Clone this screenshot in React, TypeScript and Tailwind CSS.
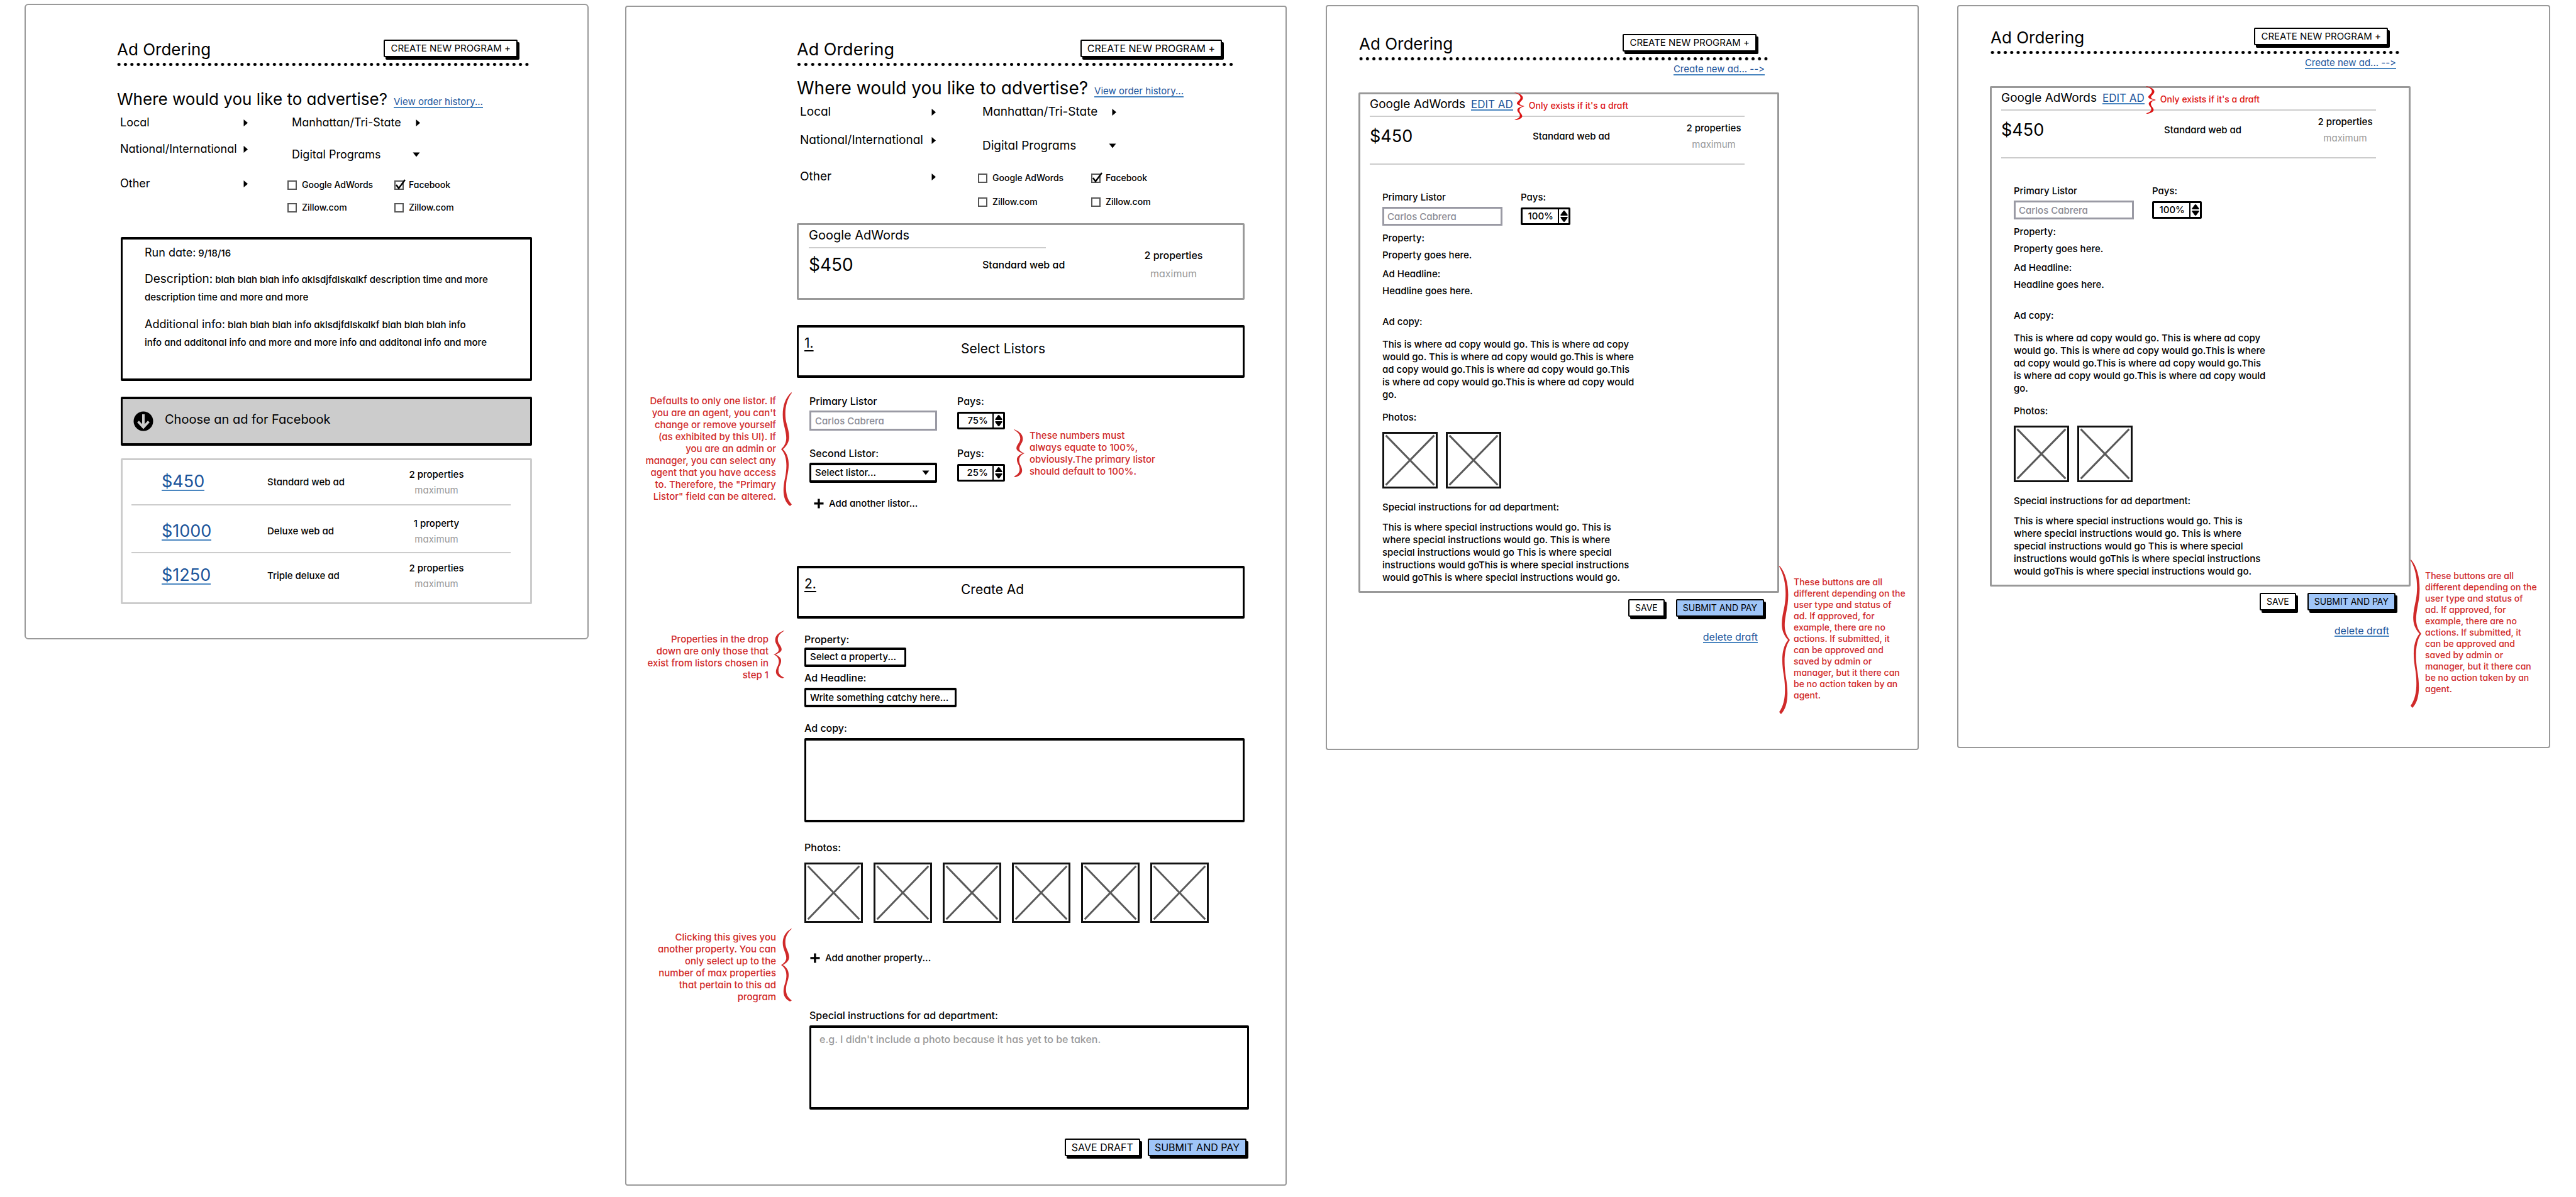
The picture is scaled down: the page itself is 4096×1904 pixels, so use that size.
import { useId, type ReactNode } from "react";

function Brace({ dir, className }: { dir: "left" | "right"; className: string }) {
  return (
    <svg
      viewBox="0 0 24 200"
      preserveAspectRatio="none"
      aria-hidden="true"
      className={`shrink-0 fill-current ${dir === "right" ? "-scale-x-100" : ""} ${className}`}
    >
      <path d="M23 0 C6 12 1 32 5 52 C10 72 19 86 0 100 C15 112 13 134 9 150 C3 170 3 190 20 200 L24 197 C10 186 9 168 13 150 C19 130 20 112 4 100 C25 86 18 72 12 54 C7 38 9 16 24 1 Z" />
    </svg>
  );
}

function ArrowRight() {
  return (
    <svg viewBox="0 0 7 11" className="h-[11px] w-[7px] shrink-0" aria-hidden="true">
      <path d="M0.5 0 L7 5.5 L0.5 11 Z" />
    </svg>
  );
}

function ArrowDown() {
  return (
    <svg viewBox="0 0 12 8" className="h-2 w-3 shrink-0" aria-hidden="true">
      <path d="M0.5 0.5 L11.5 0.5 L6 7.5 Z" />
    </svg>
  );
}

function Plus() {
  return (
    <svg viewBox="0 0 16 16" className="size-4 shrink-0" aria-hidden="true">
      <path d="M6.2 0.5 h3.4 v5.8 h5.9 v3.2 h-5.9 v6 h-3.4 v-6 h-5.7 v-3.2 h5.7 Z" />
    </svg>
  );
}

function SketchButton({
  children,
  blue = false,
  size = "text-[15px]",
}: {
  children: ReactNode;
  blue?: boolean;
  size?: string;
}) {
  return (
    <button
      type="button"
      className={`h-7 whitespace-nowrap rounded-[2px] border-2 border-black px-[9px] font-normal leading-5 shadow-[3px_4px_0_#000] ${size} ${
        blue ? "bg-[#9fc5f8]" : "bg-white"
      }`}
    >
      {children}
    </button>
  );
}

function TextLink({ children, className = "" }: { children: ReactNode; className?: string }) {
  return (
    <a
      href="#"
      className={`inline-block whitespace-nowrap border-b-2 border-[#4a86c0] font-normal text-[#1c559b] ${className}`}
    >
      {children}
    </a>
  );
}

function Header({
  size = "text-[26px]",
  buttonSize,
  className = "",
}: {
  size?: string;
  buttonSize?: string;
  className?: string;
}) {
  return (
    <header className={className}>
      <div className="flex h-8 items-start justify-between pl-[2px] pr-[20px]">
        <h1 className={`font-normal leading-8 ${size}`}>Ad Ordering</h1>
        <SketchButton size={buttonSize}>CREATE NEW PROGRAM +</SketchButton>
      </div>
      <div className="mt-[5px] h-[5px] bg-[radial-gradient(circle,#000_2px,transparent_3px)] bg-[length:calc(100%/64)_5px]" />
    </header>
  );
}

function Question({ size, className }: { size: string; className: string }) {
  return (
    <div className={`flex items-baseline gap-[10px] pl-[2px] ${className}`}>
      <h2 className={`whitespace-nowrap font-normal leading-8 ${size}`}>Where would you like to advertise?</h2>
      <TextLink className="text-[15px] leading-4">View order history...</TextLink>
    </div>
  );
}

function Check({ label, checked = false }: { label: string; checked?: boolean }) {
  const id = useId();
  return (
    <div className="relative flex h-5 items-center gap-2">
      <input
        id={id}
        type="checkbox"
        defaultChecked={checked}
        className="peer size-[15px] shrink-0 appearance-none border-2 border-[#555] bg-white"
      />
      <svg
        viewBox="0 0 18 18"
        className="pointer-events-none absolute left-0 top-0 hidden size-[18px] peer-checked:block"
        fill="none"
        stroke="#000"
        strokeWidth="2.4"
        aria-hidden="true"
      >
        <path d="M3 10 L7 15.5 L17 2" />
      </svg>
      <label htmlFor={id} className="whitespace-nowrap text-[14px] leading-5">
        {label}
      </label>
    </div>
  );
}

type Spacing = {
  text: string;
  left: string;
  right: string;
  programs: string;
  second: string;
  third: string;
  digital: string;
  checks: string;
};

const compact: Spacing = {
  text: "text-[18px]",
  left: "w-[203px]",
  right: "ml-[63px]",
  programs: "w-[211px]",
  second: "mt-[22px]",
  third: "mt-[35px]",
  digital: "mt-[31px]",
  checks: "mt-[28px] gap-y-4",
};

const roomy: Spacing = {
  text: "text-[19px]",
  left: "w-[216px]",
  right: "ml-[67px]",
  programs: "w-[220px]",
  second: "mt-[25px]",
  third: "mt-[38px]",
  digital: "mt-[34px]",
  checks: "mt-[31px] gap-x-[10px] gap-y-[18px]",
};

function Disclosure({ label, open = false, className = "" }: { label: string; open?: boolean; className?: string }) {
  return (
    <button
      type="button"
      aria-expanded={open}
      className={`flex w-full items-center justify-between whitespace-nowrap font-normal leading-5 ${className}`}
    >
      {label}
      {open ? <ArrowDown /> : <ArrowRight />}
    </button>
  );
}

function Programs({ spacing: s, className }: { spacing: Spacing; className: string }) {
  return (
    <div className={`flex items-start pl-[7px] ${className}`}>
      <div className={`${s.left} ${s.text}`}>
        <Disclosure label="Local" />
        <Disclosure label="National/International" className={s.second} />
        <Disclosure label="Other" className={s.third} />
      </div>
      <div className={s.right}>
        <div className={`pl-[7px] ${s.programs} ${s.text}`}>
          <Disclosure label="Manhattan/Tri-State" />
          <Disclosure label="Digital Programs" open className={s.digital} />
        </div>
        <div className={`grid grid-cols-[170px_auto] ${s.checks}`}>
          <Check label="Google AdWords" />
          <Check label="Facebook" checked />
          <Check label="Zillow.com" />
          <Check label="Zillow.com" />
        </div>
      </div>
    </div>
  );
}

function Lines({ lines }: { lines: string[] }) {
  return (
    <>
      {lines.map((line) => (
        <span key={line} className="block whitespace-nowrap">
          {line}
        </span>
      ))}
    </>
  );
}

function Spinner({ value, label, className }: { value: string; label: string; className: string }) {
  return (
    <div className={`flex rounded-[2px] border-[3px] border-black ${className}`}>
      <input
        aria-label={label}
        defaultValue={value}
        className="w-0 flex-1 pr-[7px] text-right text-[15px] leading-5 outline-none"
      />
      <div className="flex w-[17px] flex-col items-center justify-center gap-[2px] border-l-2 border-black">
        <button type="button" aria-label={`Increase ${label}`}>
          <svg viewBox="0 0 12 8" className="block h-2 w-3" aria-hidden="true">
            <path d="M0.5 8 V6.5 L4.5 1 Q6 -1 7.5 1 L11.5 6.5 V8 Z" />
          </svg>
        </button>
        <button type="button" aria-label={`Decrease ${label}`}>
          <svg viewBox="0 0 12 8" className="block h-2 w-3" aria-hidden="true">
            <path d="M0.5 0 V1.5 L4.5 7 Q6 9 7.5 7 L11.5 1.5 V0 Z" />
          </svg>
        </button>
      </div>
    </div>
  );
}

function Photo({ className }: { className: string }) {
  return (
    <div role="img" aria-label="Photo placeholder" className={`border-[3px] border-[#111] p-px ${className}`}>
      <svg viewBox="0 0 100 100" preserveAspectRatio="none" className="size-full" stroke="#5a5a5a" strokeWidth="3">
        <path vectorEffect="non-scaling-stroke" d="M2 2 L98 98 M98 2 L2 98" fill="none" />
      </svg>
    </div>
  );
}

function Properties({ count, className = "text-[15px]" }: { count: string; className?: string }) {
  return (
    <div className={`flex w-[94px] flex-col text-center ${className}`}>
      <span className="whitespace-nowrap">{count}</span>
      <span className="font-normal text-[#999]">maximum</span>
    </div>
  );
}

const inkBox = "rounded-[2px] border-x-[3px] border-y-[4px] border-black";

function ChooseAdScreen() {
  const offers = [
    { price: "$450", name: "Standard web ad", count: "2 properties", row: "h-[71px] border-b-2", cell: "" },
    { price: "$1000", name: "Deluxe web ad", count: "1 property", row: "h-[76px] border-b-2", cell: "pt-[9px]" },
    { price: "$1250", name: "Triple deluxe ad", count: "2 properties", row: "h-[79px]", cell: "pb-[6px]" },
  ];
  return (
    <section className="mr-[58px] rounded-[6px] border-2 border-[#999] pb-[54px] pl-[143px] pr-[88px] pt-[55px]">
      <Header className="mr-[3px]" />
      <Question size="text-[26px]" className="mt-[37px]" />
      <Programs spacing={compact} className="mt-[11px]" />

      <div className={`ml-2 mt-[37px] pb-[43px] pl-[35px] pt-[7px] text-[15px] leading-7 ${inkBox}`}>
        <p>
          <span className="text-[18px] font-normal">Run date:</span> 9/18/16
        </p>
        <p className="mt-[13px] whitespace-nowrap">
          <span className="text-[19px] font-normal">Description:</span> blah blah blah info aklsdjfdlskalkf description
          time and more
          <br />
          description time and more and more
        </p>
        <p className="mt-[15px] whitespace-nowrap">
          <span className="text-[18px] font-normal">Additional info:</span> blah blah blah info aklsdjfdlskalkf blah blah
          blah info
          <br />
          info and additonal info and more and more info and additonal info and more
        </p>
      </div>

      <div className={`ml-2 mt-[25px] flex h-[78px] items-center gap-[18px] bg-[#ccc] pl-[17px] ${inkBox}`}>
        <svg viewBox="0 0 32 32" className="size-8 shrink-0" aria-hidden="true">
          <circle cx="16" cy="16" r="15.5" />
          <path d="M16 5 V25 M7.5 16.5 L16 25.5 L24.5 16.5" fill="none" stroke="#ccc" strokeWidth="4" />
        </svg>
        <h3 className="pb-[6px] text-[20px] font-normal leading-7">Choose an ad for Facebook</h3>
      </div>

      <div className="ml-2 mt-[20px] rounded-[2px] border-[3px] border-[#ccc] pl-[14px] pr-[31px]">
        <table className="w-full">
          <tbody>
            {offers.map((o) => (
              <tr key={o.price} className={`border-[#ccc] ${o.row}`}>
                <td className={`w-[216px] pl-12 ${o.cell}`}>
                  <TextLink className="text-[27px] leading-[26px]">{o.price}</TextLink>
                </td>
                <td className={`w-[222px] text-[15px] ${o.cell}`}>{o.name}</td>
                <td className={o.cell}>
                  <Properties count={o.count} className="gap-[5px] text-[15px] leading-5" />
                </td>
              </tr>
            ))}
          </tbody>
        </table>
      </div>
    </section>
  );
}

const fieldLabel = "block whitespace-nowrap text-[16px] leading-5";
const noteText = "text-[15px] leading-[19px]";

function StepBox({ number, title, className }: { number: string; title: string; className: string }) {
  return (
    <div
      className={`ml-[271px] mr-[7px] grid h-[84px] grid-cols-[249px_auto] items-start pl-[9px] text-[21px] font-normal leading-7 ${inkBox} ${className}`}
    >
      <span className="pt-[11px] underline decoration-2 underline-offset-4">{number}</span>
      <h3 className="pt-[20px]">{title}</h3>
    </div>
  );
}

function LeftNote({ lines, brace, className = "pr-[8px]" }: { lines: string[]; brace: string; className?: string }) {
  return (
    <aside className={`flex w-[271px] shrink-0 items-start justify-end gap-[8px] text-[#d02a2a] ${className}`}>
      <p className={`pt-[4px] text-right ${noteText}`}>
        <Lines lines={lines} />
      </p>
      <Brace dir="left" className={`w-[17px] ${brace}`} />
    </aside>
  );
}

function CreateAdScreen() {
  const id = useId();
  return (
    <section className="mr-[62px] mt-[3px] rounded-[4px] border-2 border-[#999] pb-[45px] pr-[58px] pt-[52px]">
      <div className="ml-[269px] mr-[7px]">
        <Header size="text-[27px]" buttonSize="text-[16px]" className="mr-[16px]" />
        <Question size="text-[28px]" className="mt-[19px]" />
        <Programs spacing={roomy} className="mt-[12px]" />

        <div className="ml-[2px] mt-[24px] rounded-[2px] border-[3px] border-[#999] pb-[29px] pl-[16px] pt-[6px]">
          <h3 className="text-[20px] font-normal leading-5">Google AdWords</h3>
          <hr className="mt-[9px] w-[377px] border-t-2 border-[#ccc]" />
          <div className="mt-px grid grid-cols-[276px_257px_auto] items-center">
            <span className="text-[28px] font-normal leading-8">$450</span>
            <span className="text-[16px] leading-5">Standard web ad</span>
            <Properties count="2 properties" className="gap-[9px] text-[16px] leading-5" />
          </div>
        </div>
      </div>

      <StepBox number="1." title="Select Listors" className="mt-[40px]" />

      <div className="mt-[23px] flex items-start">
        <LeftNote
          brace="h-[181px]"
          lines={[
            "Defaults to only one listor. If",
            "you are an agent, you can't",
            "change or remove yourself",
            "(as exhibited by this UI). If",
            "you are an admin or",
            "manager, you can select any",
            "agent that you have access",
            'to. Therefore, the "Primary',
            'Listor" field can be altered.',
          ]}
        />
        <div className="pl-[20px] pt-[4px]">
          <div className="grid grid-cols-[203px_76px] items-center gap-x-[32px]">
            <label htmlFor={`${id}-primary`} className={fieldLabel}>
              Primary Listor
            </label>
            <span className={fieldLabel}>Pays:</span>
            <input
              id={`${id}-primary`}
              defaultValue="Carlos Cabrera"
              className="mt-[5px] h-8 border-[3px] border-[#9a9aa4] px-[6px] text-[15px] text-[#8a8a94]"
            />
            <Spinner value="75%" label="Primary listor pays" className="mt-[5px] h-7" />
            <label htmlFor={`${id}-second`} className={`mt-[26px] ${fieldLabel}`}>
              Second Listor:
            </label>
            <span className={`mt-[26px] ${fieldLabel}`}>Pays:</span>
            <div className="relative mt-[5px]">
              <select
                id={`${id}-second`}
                className={`block h-8 w-full appearance-none bg-white px-[6px] text-[15px] ${inkBox}`}
              >
                <option>Select listor...</option>
              </select>
              <span className="pointer-events-none absolute inset-y-0 right-3 flex items-center">
                <ArrowDown />
              </span>
            </div>
            <Spinner value="25%" label="Second listor pays" className="mt-[5px] h-7" />
          </div>
          <button type="button" className="ml-[7px] mt-[23px] flex items-center gap-[8px] text-[15px] leading-5">
            <Plus />
            Add another listor...
          </button>
        </div>
        <aside className="ml-[14px] mt-[59px] flex items-start gap-[8px] text-[#d02a2a]">
          <Brace dir="right" className="h-[76px] w-[17px]" />
          <p className={noteText}>
            <Lines
              lines={["These numbers must", "always equate to 100%,", "obviously.The primary listor", "should default to 100%."]}
            />
          </p>
        </aside>
      </div>

      <StepBox number="2." title="Create Ad" className="mt-[89px]" />

      <div className="mr-[7px] mt-[19px] flex items-start">
        <LeftNote
          brace="h-[76px]"
          className="pr-[20px]"
          lines={["Properties in the drop", "down are only those that", "exist from listors chosen in", "step 1"]}
        />
        <div className="flex-1 pl-3 pt-1">
          <label htmlFor={`${id}-property`} className={fieldLabel}>
            Property:
          </label>
          <select
            id={`${id}-property`}
            className={`mt-[3px] block h-[31px] w-[162px] appearance-none bg-white px-[6px] text-[15px] ${inkBox}`}
          >
            <option>Select a property...</option>
          </select>
          <label htmlFor={`${id}-headline`} className={`mt-[7px] ${fieldLabel}`}>
            Ad Headline:
          </label>
          <input
            id={`${id}-headline`}
            placeholder="Write something catchy here..."
            className={`mt-[6px] block h-[31px] w-[242px] px-[6px] text-[15px] placeholder:text-black ${inkBox}`}
          />
          <label htmlFor={`${id}-copy`} className={`mt-[23px] ${fieldLabel}`}>
            Ad copy:
          </label>
          <textarea id={`${id}-copy`} className={`mt-[6px] block h-[134px] w-full resize-none ${inkBox}`} />
          <h4 className={`mt-[30px] ${fieldLabel}`}>Photos:</h4>
          <div className="mt-[14px] flex gap-[17px]">
            {[1, 2, 3, 4, 5, 6].map((n) => (
              <Photo key={n} className="h-24 w-[93px]" />
            ))}
          </div>
        </div>
      </div>

      <div className="mt-[9px] flex items-start">
        <LeftNote
          brace="h-[116px]"
          lines={[
            "Clicking this gives you",
            "another property. You can",
            "only select up to the",
            "number of max properties",
            "that pertain to this ad",
            "program",
          ]}
        />
        <button type="button" className="ml-[21px] mt-[37px] flex items-center gap-[8px] text-[15px] leading-5">
          <Plus />
          Add another property...
        </button>
      </div>

      <div className="ml-[291px] mt-[10px]">
        <label htmlFor={`${id}-special`} className={fieldLabel}>
          Special instructions for ad department:
        </label>
        <textarea
          id={`${id}-special`}
          placeholder="e.g. I didn't include a photo because it has yet to be taken."
          className={`mt-[6px] block h-[134px] w-full resize-none px-[13px] pt-[8px] text-[16px] leading-5 placeholder:text-[#999] ${inkBox}`}
        />
        <div className="mt-[46px] flex justify-end gap-3 pr-[4px]">
          <SketchButton size="text-[16px]">SAVE DRAFT</SketchButton>
          <SketchButton size="text-[16px]" blue>
            SUBMIT AND PAY
          </SketchButton>
        </div>
      </div>
    </section>
  );
}

function ReviewScreen({ className }: { className: string }) {
  const id = useId();
  return (
    <section className={`mt-[2px] flex items-end rounded-[4px] border-2 border-[#999] pl-[49px] ${className}`}>
      <div className="flex-1 pb-[111px]">
        <Header className="mr-[16px]" />
        <div className="mr-[23px] mt-[6px] flex h-5 justify-end">
          <TextLink className="self-start text-[15px] leading-4">Create new ad... --&gt;</TextLink>
        </div>

        <div className="ml-px mt-[25px] rounded-[2px] border-[3px] border-[#999] pb-[11px] pl-[15px] pt-[6px]">
          <div className="flex h-5 items-start text-[#dc1414]">
            <h3 className="whitespace-nowrap text-[19px] font-normal leading-5 text-black">Google AdWords</h3>
            <TextLink className="ml-[9px] mt-[2px] text-[17px] leading-4">EDIT AD</TextLink>
            <Brace dir="right" className="-mb-[15px] -mt-[9px] ml-[2px] h-[44px] w-4" />
            <p className="ml-[7px] mt-[2px] whitespace-nowrap text-[14px] leading-5">Only exists if it's a draft</p>
          </div>
          <hr className="mr-[52px] mt-[8px] border-t-2 border-[#ccc]" />
          <div className="mt-[8px] grid grid-cols-[259px_241px_auto] items-center">
            <span className="text-[27px] font-normal leading-8">$450</span>
            <span className="text-[15px] leading-5">Standard web ad</span>
            <Properties count="2 properties" className="gap-[6px] text-[15px] leading-5" />
          </div>
          <hr className="mr-[52px] mt-[20px] border-t-2 border-[#ccc]" />

          <div className="mt-[42px] pl-5 text-[15px] leading-5">
            <div className="grid grid-cols-[191px_79px] items-center gap-x-[29px]">
              <label htmlFor={`${id}-primary`}>Primary Listor</label>
              <span>Pays:</span>
              <input
                id={`${id}-primary`}
                defaultValue="Carlos Cabrera"
                className="mt-[5px] h-[30px] border-[3px] border-[#9a9aa4] px-[5px] text-[#8a8a94]"
              />
              <Spinner value="100%" label="Primary listor pays" className="mt-[5px] h-7" />
            </div>
            <h4 className="mt-[10px]">Property:</h4>
            <p className="mt-[7px]">Property goes here.</p>
            <h4 className="mt-[10px]">Ad Headline:</h4>
            <p className="mt-[7px]">Headline goes here.</p>
            <h4 className="mt-[29px]">Ad copy:</h4>
            <p className="mt-4">
              <Lines
                lines={[
                  "This is where ad copy would go. This is where ad copy",
                  "would go. This is where ad copy would go.This is where",
                  "ad copy would go.This is where ad copy would go.This",
                  "is where ad copy would go.This is where ad copy would",
                  "go.",
                ]}
              />
            </p>
            <h4 className="mt-4">Photos:</h4>
            <div className="mt-[13px] flex gap-[13px]">
              <Photo className="h-[90px] w-[88px]" />
              <Photo className="h-[90px] w-[88px]" />
            </div>
            <h4 className="mt-[20px]">Special instructions for ad department:</h4>
            <p className="mt-[12px]">
              <Lines
                lines={[
                  "This is where special instructions would go. This is",
                  "where special instructions would go. This is where",
                  "special instructions would go This is where special",
                  "instructions would goThis is where special instructions",
                  "would goThis is where special instructions would go.",
                ]}
              />
            </p>
          </div>
        </div>

        <div className="mr-[24px] mt-[10px] flex justify-end gap-[18px]">
          <SketchButton size="text-[14px]">SAVE</SketchButton>
          <SketchButton size="text-[14px]" blue>
            SUBMIT AND PAY
          </SketchButton>
        </div>
        <div className="mr-[34px] mt-[24px] flex h-5 justify-end">
          <TextLink className="self-start text-[16px] leading-4">delete draft</TextLink>
        </div>
      </div>

      <aside className="flex w-[220px] shrink-0 items-start gap-[6px] text-[#d02a2a]">
        <Brace dir="right" className="h-[236px] w-[17px]" />
        <p className="pt-[17px] text-[14px] leading-[18px]">
          <Lines
            lines={[
              "These buttons are all",
              "different depending on the",
              "user type and status of",
              "ad. If approved, for",
              "example, there are no",
              "actions. If submitted, it",
              "can be approved and",
              "saved by admin or",
              "manager, but it there can",
              "be no action taken by an",
              "agent.",
            ]}
          />
        </p>
      </aside>
    </section>
  );
}

export default function App() {
  return (
    <main className="grid min-h-screen grid-cols-[955fr_1114fr_1004fr_943fr] content-start items-start bg-white pl-[39px] pr-[41px] pt-[6px] font-['Inter',sans-serif] font-[450] text-black [font-feature-settings:'cv11'_1,'calt'_0]">
      <ChooseAdScreen />
      <CreateAdScreen />
      <ReviewScreen className="mr-[61px] pb-[55px] pt-[44px]" />
      <ReviewScreen className="pb-[62px] pt-[34px]" />
    </main>
  );
}
